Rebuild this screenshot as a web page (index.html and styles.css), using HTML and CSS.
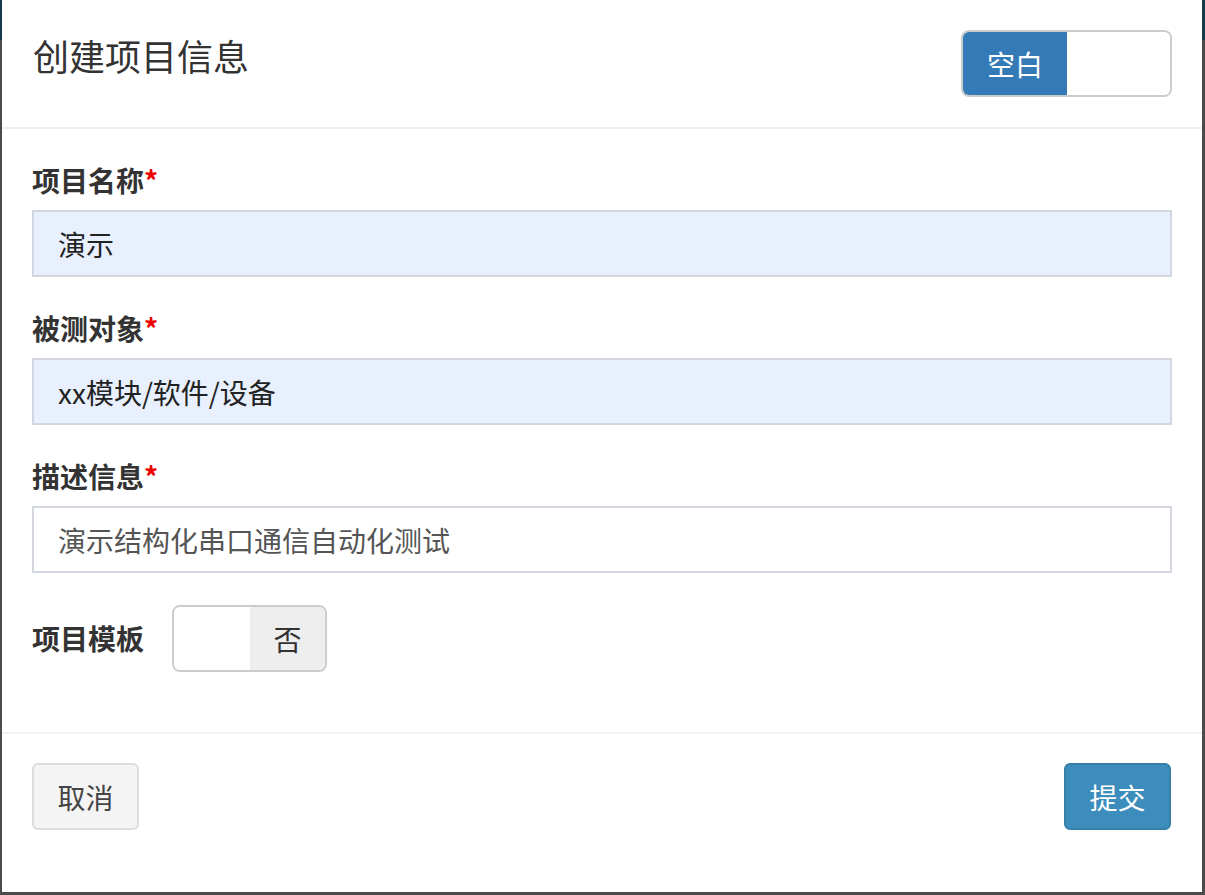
FILE: index.html
```html
<!DOCTYPE html>
<html lang="zh-CN">
<head>
<meta charset="utf-8">
<title>创建项目信息</title>
<link rel="stylesheet" href="styles.css">
</head>
<body>
<div class="backdrop">
  <div class="backdrop-bar"></div>
</div>
<div class="modal">
  <div class="modal-header">
    <h4 class="modal-title">创建项目信息</h4>
    <div class="switch switch-mode">
      <span class="switch-on">空白</span>
      <span class="switch-off-blank"></span>
    </div>
  </div>
  <div class="modal-body">
    <div class="form-group">
      <label class="form-label">项目名称<span class="req">*</span></label>
      <div class="form-control filled">演示</div>
    </div>
    <div class="form-group">
      <label class="form-label">被测对象<span class="req">*</span></label>
      <div class="form-control filled">xx模块/软件/设备</div>
    </div>
    <div class="form-group">
      <label class="form-label">描述信息<span class="req">*</span></label>
      <div class="form-control plain">演示结构化串口通信自动化测试</div>
    </div>
    <div class="form-group form-row">
      <label class="form-label inline">项目模板</label>
      <div class="switch switch-template">
        <span class="switch-blank"></span>
        <span class="switch-off">否</span>
      </div>
    </div>
  </div>
  <div class="modal-footer">
    <button class="btn btn-default">取消</button>
    <button class="btn btn-primary">提交</button>
  </div>
</div>
</body>
</html>
```

FILE: styles.css
```css
* { box-sizing: border-box; }
html, body {
  margin: 0;
  padding: 0;
  width: 1205px;
  height: 895px;
  overflow: hidden;
}
body {
  background: #4b4b4b;
  font-family: "Noto Sans CJK SC", "Liberation Sans", sans-serif;
  color: #333;
  position: relative;
}
.backdrop { height: 895px; }
.backdrop-bar {
  height: 40px;
  background: #173a4f;
}
.modal {
  position: absolute;
  left: 2px;
  top: 0;
  width: 1200px;
  height: 892px;
  background: #fff;
  display: flex;
  flex-direction: column;
}
.modal-header {
  padding: 30px 30px 30px 30px;
  border-bottom: 2px solid #efefef;
  display: flex;
  justify-content: space-between;
  align-items: flex-start;
}
.modal-title {
  margin: 0;
  font-size: 36px;
  font-weight: 400;
  line-height: 51px;
  color: #333;
  padding-left: 1px;
}
.switch {
  display: flex;
  border: 2px solid #ccc;
  border-radius: 8px;
  overflow: hidden;
  height: 67px;
}
.switch span {
  display: flex;
  align-items: center;
  justify-content: center;
  font-size: 28px;
  line-height: 1;
}
.switch-mode { width: 211px; }
.switch-on {
  width: 104px;
  background: #337ab7;
  color: #fff;
}
.switch-off-blank { flex: 1; background: #fff; }
.switch-template { width: 155px; }
.switch-blank { width: 76px; background: #fff; }
.switch-off {
  flex: 1;
  background: #eee;
  color: #333;
}
.modal-body {
  padding: 32px 30px 28px;
}
.form-group { margin-bottom: 32px; }
.form-label {
  display: block;
  font-size: 28px;
  font-weight: 700;
  line-height: 39px;
  margin-bottom: 10px;
  color: #333;
}
.req { color: #e00; }
.form-control {
  height: 67px;
  border: 2px solid #d2d6de;
  padding: 0 24px;
  font-size: 28px;
  display: flex;
  align-items: center;
}
.filled { background: #e8f0fe; color: #222; }
.plain { background: #fff; color: #555; }
.form-row {
  display: flex;
  align-items: center;
  gap: 28px;
}
.form-label.inline { margin-bottom: 0; }
.modal-footer {
  border-top: 2px solid #f2f2f2;
  padding: 29px 31px 30px 30px;
  display: flex;
  justify-content: space-between;
}
.btn {
  width: 107px;
  height: 67px;
  border-radius: 6px;
  font-family: "Noto Sans CJK SC", "Liberation Sans", sans-serif;
  font-size: 28px;
  padding: 0;
  cursor: pointer;
}
.btn-default {
  background: #f4f4f4;
  border: 2px solid #ddd;
  color: #444;
}
.btn-primary {
  background: #3c8dbc;
  border: 2px solid #367fa9;
  color: #fff;
}
```
